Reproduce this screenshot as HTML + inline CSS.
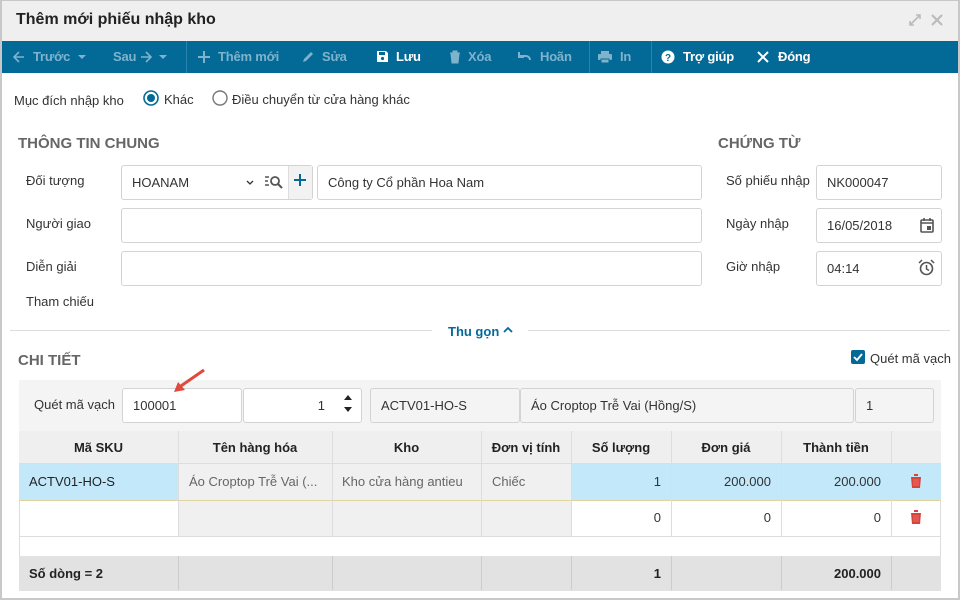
<!DOCTYPE html>
<html><head><meta charset="utf-8"><style>
*{box-sizing:border-box;margin:0;padding:0}
body{width:960px;height:600px;background:#fff;font-family:"Liberation Sans",sans-serif;font-size:13px;color:#333;position:relative;overflow:hidden}
.a{position:absolute}
.win{left:0;top:0;width:960px;height:600px;border:2px solid #c8c8c8;border-top:1px solid #c8c8c8}
.tb{left:2px;top:41px;width:956px;height:32px;background:#036a98}
.ti{position:absolute;top:49px;font-size:13px;color:#7fb3cc;font-weight:bold;letter-spacing:-.2px}
.tw{color:#fff}
.sep{position:absolute;top:41px;width:1px;height:32px;background:#2a84ad}
.lbl{position:absolute;font-size:13px;color:#333}
.inp{position:absolute;border:1px solid #d3d3d3;border-radius:3px;background:#fff;font-size:13px;padding-left:10px;display:flex;align-items:center}
.h{position:absolute;font-weight:bold;font-size:15px;color:#666}
</style></head><body>
<div class="a" style="left:2px;top:1px;width:956px;height:40px;background:#efefef"></div>
<div class="a win"></div>
<div class="a" style="left:16px;top:11px;font-size:16px;font-weight:bold;color:#222">Thêm mới phiếu nhập kho</div>
<svg class="a" style="left:908px;top:13px" width="14" height="14"><path d="M2 12L12 2M8 2h4v4M2 8v4h4" stroke="#bbb" stroke-width="1.6" fill="none"/></svg>
<svg class="a" style="left:930px;top:13px" width="14" height="14"><path d="M2 2L12 12M12 2L2 12" stroke="#bbb" stroke-width="2.2"/></svg>
<div class="a tb"></div>
<div class="sep" style="left:186px"></div><div class="sep" style="left:589px"></div><div class="sep" style="left:651px"></div>
<svg class="a" style="left:12px;top:50px" width="14" height="14"><path d="M12 7H2M7 2L2 7l5 5" stroke="#7fb3cc" stroke-width="1.6" fill="none"/></svg>
<div class="ti" style="left:33px">Trước</div>
<svg class="a" style="left:78px;top:55px" width="8" height="5"><path d="M0 0h8L4 4z" fill="#7fb3cc"/></svg>
<div class="ti" style="left:113px">Sau</div>
<svg class="a" style="left:139px;top:50px" width="14" height="14"><path d="M2 7h10M7 2l5 5-5 5" stroke="#7fb3cc" stroke-width="1.6" fill="none"/></svg>
<svg class="a" style="left:159px;top:55px" width="8" height="5"><path d="M0 0h8L4 4z" fill="#7fb3cc"/></svg>
<svg class="a" style="left:197px;top:50px" width="14" height="14"><path d="M7 1v12M1 7h12" stroke="#7fb3cc" stroke-width="2"/></svg>
<div class="ti" style="left:218px">Thêm mới</div>
<svg class="a" style="left:301px;top:50px" width="14" height="14"><path d="M2 12l1-3 7-7 2 2-7 7z" fill="#7fb3cc"/></svg>
<div class="ti" style="left:322px">Sửa</div>
<svg class="a" style="left:376px;top:50px" width="13" height="13"><path d="M1 1h9l2 2v9H1z" fill="#fff"/><rect x="3" y="2" width="6" height="3" fill="#036a98"/><circle cx="6.5" cy="8.5" r="1.6" fill="#036a98"/></svg>
<div class="ti tw" style="left:396px">Lưu</div>
<svg class="a" style="left:449px;top:50px" width="12" height="14"><path d="M1 3h10M4 3V1h4v2M2 4h8l-1 9H3z" fill="#7fb3cc" stroke="#7fb3cc"/></svg>
<div class="ti" style="left:468px">Xóa</div>
<svg class="a" style="left:517px;top:51px" width="15" height="12"><path d="M2 5h7a4 4 0 014 4M2 1v5h5" stroke="#7fb3cc" stroke-width="2" fill="none"/></svg>
<div class="ti" style="left:540px">Hoãn</div>
<svg class="a" style="left:597px;top:50px" width="16" height="14"><rect x="4" y="1" width="8" height="3" fill="#7fb3cc"/><rect x="1" y="4" width="14" height="6" rx="1" fill="#7fb3cc"/><rect x="4" y="9" width="8" height="4" fill="#7fb3cc" stroke="#036a98"/></svg>
<div class="ti" style="left:620px">In</div>
<svg class="a" style="left:661px;top:50px" width="14" height="14"><circle cx="7" cy="7" r="6.5" fill="#fff"/><text x="7" y="11" font-size="10" font-weight="bold" text-anchor="middle" fill="#036a98" font-family="Liberation Sans">?</text></svg>
<div class="ti tw" style="left:683px">Trợ giúp</div>
<svg class="a" style="left:757px;top:51px" width="12" height="12"><path d="M1 1l10 10M11 1L1 11" stroke="#fff" stroke-width="2"/></svg>
<div class="ti tw" style="left:778px">Đóng</div>

<div class="lbl" style="left:14px;top:93px">Mục đích nhập kho</div>
<svg class="a" style="left:143px;top:90px" width="16" height="16"><circle cx="8" cy="8" r="7" stroke="#036a98" stroke-width="1.6" fill="#fff"/><circle cx="8" cy="8" r="4" fill="#036a98"/></svg>
<div class="lbl" style="left:164px;top:92px">Khác</div>
<svg class="a" style="left:212px;top:90px" width="16" height="16"><circle cx="8" cy="8" r="7" stroke="#777" stroke-width="1.4" fill="#fff"/></svg>
<div class="lbl" style="left:232px;top:92px">Điều chuyển từ cửa hàng khác</div>

<div class="h" style="left:18px;top:135px">THÔNG TIN CHUNG</div>
<div class="h" style="left:718px;top:135px">CHỨNG TỪ</div>
<div class="lbl" style="left:26px;top:173px">Đối tượng</div>
<div class="lbl" style="left:26px;top:216px">Người giao</div>
<div class="lbl" style="left:26px;top:259px">Diễn giải</div>
<div class="lbl" style="left:26px;top:294px">Tham chiếu</div>
<div class="inp" style="left:121px;top:165px;width:192px;height:35px">HOANAM</div>
<div class="a" style="left:288px;top:166px;width:24px;height:33px;background:#f2f2f2;border-left:1px solid #ddd"></div>
<svg class="a" style="left:293px;top:173px" width="14" height="14"><path d="M7 1v12M1 7h12" stroke="#036a98" stroke-width="2"/></svg>
<svg class="a" style="left:246px;top:180px" width="8" height="5"><path d="M1 1l3 3 3-3" stroke="#333" stroke-width="1.3" fill="none"/></svg>
<svg class="a" style="left:265px;top:175px" width="20" height="14"><path d="M0 2h4M0 6h3M0 10h4" stroke="#555" stroke-width="1.4"/><circle cx="10" cy="6" r="4" stroke="#555" stroke-width="1.8" fill="none"/><path d="M13 9l4 4" stroke="#555" stroke-width="2"/></svg>
<div class="inp" style="left:317px;top:165px;width:385px;height:35px">Công ty Cổ phần Hoa Nam</div>
<div class="inp" style="left:121px;top:208px;width:581px;height:35px"></div>
<div class="inp" style="left:121px;top:251px;width:581px;height:35px"></div>
<div class="lbl" style="left:726px;top:173px">Số phiếu nhập</div>
<div class="lbl" style="left:726px;top:216px">Ngày nhập</div>
<div class="lbl" style="left:726px;top:259px">Giờ nhập</div>
<div class="inp" style="left:816px;top:165px;width:126px;height:35px">NK000047</div>
<div class="inp" style="left:816px;top:208px;width:126px;height:35px">16/05/2018</div>
<div class="inp" style="left:816px;top:251px;width:126px;height:35px">04:14</div>
<svg class="a" style="left:920px;top:218px" width="14" height="15"><rect x="1" y="2" width="12" height="12" rx="1" stroke="#555" stroke-width="1.6" fill="none"/><path d="M1 5h12M4 0v3M10 0v3" stroke="#555" stroke-width="1.6"/><rect x="7" y="8" width="4" height="4" fill="#555"/></svg>
<svg class="a" style="left:918px;top:259px" width="17" height="17"><circle cx="8.5" cy="9.5" r="6" stroke="#555" stroke-width="1.6" fill="none"/><path d="M8.5 6v4l2.5 1.5M1 4l3-3M16 4l-3-3" stroke="#555" stroke-width="1.5" fill="none"/></svg>

<div class="a" style="left:10px;top:330px;width:422px;height:1px;background:#ddd"></div>
<div class="a" style="left:528px;top:330px;width:422px;height:1px;background:#ddd"></div>
<div class="a" style="left:448px;top:324px;font-weight:bold;color:#036a98;font-size:13px">Thu gọn</div>
<svg class="a" style="left:503px;top:326px" width="10" height="7"><path d="M1 6l4-4 4 4" stroke="#036a98" stroke-width="1.8" fill="none"/></svg>

<div class="h" style="left:18px;top:352px">CHI TIẾT</div>
<svg class="a" style="left:851px;top:350px" width="14" height="14"><rect width="14" height="14" rx="2" fill="#036a98"/><path d="M3 7l3 3 5-6" stroke="#fff" stroke-width="1.8" fill="none"/></svg>
<div class="lbl" style="left:870px;top:351px">Quét mã vạch</div>

<div class="a" style="left:19px;top:380px;width:922px;height:51px;background:#f4f4f4"></div>
<div class="lbl" style="left:34px;top:397px">Quét mã vạch</div>
<div class="inp" style="left:122px;top:388px;width:120px;height:35px">100001</div>
<div class="inp" style="left:243px;top:388px;width:119px;height:35px;justify-content:flex-end;padding-right:36px">1</div>
<svg class="a" style="left:343px;top:392px" width="10" height="24"><path d="M1 8l4-5 4 5zM1 15l4 5 4-5z" fill="#222"/></svg>
<div class="inp" style="left:370px;top:388px;width:150px;height:35px;background:#f4f4f4">ACTV01-HO-S</div>
<div class="inp" style="left:520px;top:388px;width:334px;height:35px;background:#f4f4f4">Áo Croptop Trễ Vai (Hồng/S)</div>
<div class="inp" style="left:855px;top:388px;width:79px;height:35px;background:#f4f4f4">1</div>

<svg class="a" style="left:170px;top:366px" width="40" height="30"><path d="M34 4L8 22" stroke="#e04a3c" stroke-width="3"/><path d="M4 26l4-10 7 8z" fill="#e04a3c"/></svg>
<svg class="a" style="left:655px;top:446px" width="40" height="30"><path d="M34 4L8 22" stroke="#e04a3c" stroke-width="3"/><path d="M4 26l4-10 7 8z" fill="#e04a3c"/></svg>

<div class="a" style="left:19px;top:431px;width:922px;height:160px;border:1px solid #ddd;border-top:none"></div>
<div class="a" style="left:19px;top:431px;width:922px;height:33px;background:#efefef;border-bottom:1px solid #ddd"></div>
<div class="a" style="left:19px;top:464px;width:922px;height:36px;background:#fff;border-bottom:1px solid #ecdca0"></div>
<div class="a" style="left:19px;top:464px;width:159px;height:36px;background:#c2e8fa"></div>
<div class="a" style="left:178px;top:464px;width:393px;height:72px;background:#f0f0f0"></div>
<div class="a" style="left:571px;top:464px;width:370px;height:36px;background:#c2e8fa"></div>
<div class="a" style="left:19px;top:536px;width:922px;height:1px;background:#ddd"></div>
<div class="a" style="left:19px;top:500px;width:922px;height:1px;background:#e0d4a0"></div>
<div class="a" style="left:19px;top:556px;width:922px;height:35px;background:#e2e2e2"></div>
<div class="a" style="left:178px;top:431px;width:1px;height:105px;background:#ddd"></div>
<div class="a" style="left:332px;top:431px;width:1px;height:105px;background:#ddd"></div>
<div class="a" style="left:481px;top:431px;width:1px;height:105px;background:#ddd"></div>
<div class="a" style="left:571px;top:431px;width:1px;height:105px;background:#ddd"></div>
<div class="a" style="left:671px;top:431px;width:1px;height:105px;background:#ddd"></div>
<div class="a" style="left:781px;top:431px;width:1px;height:105px;background:#ddd"></div>
<div class="a" style="left:891px;top:431px;width:1px;height:105px;background:#ddd"></div>
<div class="a" style="left:178px;top:556px;width:1px;height:34px;background:#ccc"></div>
<div class="a" style="left:332px;top:556px;width:1px;height:34px;background:#ccc"></div>
<div class="a" style="left:481px;top:556px;width:1px;height:34px;background:#ccc"></div>
<div class="a" style="left:571px;top:556px;width:1px;height:34px;background:#ccc"></div>
<div class="a" style="left:671px;top:556px;width:1px;height:34px;background:#ccc"></div>
<div class="a" style="left:781px;top:556px;width:1px;height:34px;background:#ccc"></div>
<div class="a" style="left:891px;top:556px;width:1px;height:34px;background:#ccc"></div>
<div class="a" style="top:440px;left:19px;width:159px;text-align:center;font-weight:bold;color:#222">Mã SKU</div>
<div class="a" style="top:440px;left:178px;width:154px;text-align:center;font-weight:bold;color:#222">Tên hàng hóa</div>
<div class="a" style="top:440px;left:332px;width:149px;text-align:center;font-weight:bold;color:#222">Kho</div>
<div class="a" style="top:440px;left:481px;width:90px;text-align:center;font-weight:bold;color:#222">Đơn vị tính</div>
<div class="a" style="top:440px;left:571px;width:100px;text-align:center;font-weight:bold;color:#222">Số lượng</div>
<div class="a" style="top:440px;left:671px;width:110px;text-align:center;font-weight:bold;color:#222">Đơn giá</div>
<div class="a" style="top:440px;left:781px;width:110px;text-align:center;font-weight:bold;color:#222">Thành tiền</div>
<div class="a" style="top:474px;left:29px;color:#222">ACTV01-HO-S</div>
<div class="a" style="top:474px;left:189px;color:#666">Áo Croptop Trễ Vai (...</div>
<div class="a" style="top:474px;left:342px;color:#666">Kho cửa hàng antieu</div>
<div class="a" style="top:474px;left:492px;color:#666">Chiếc</div>
<div class="a" style="top:474px;left:571px;width:90px;text-align:right">1</div>
<div class="a" style="top:474px;left:671px;width:100px;text-align:right">200.000</div>
<div class="a" style="top:474px;left:781px;width:100px;text-align:right">200.000</div>
<div class="a" style="top:510px;left:571px;width:90px;text-align:right">0</div>
<div class="a" style="top:510px;left:671px;width:100px;text-align:right">0</div>
<div class="a" style="top:510px;left:781px;width:100px;text-align:right">0</div>
<svg class="a" style="left:910px;top:474px" width="12" height="14"><path d="M0 2h12M4 2V0h4v2M1 3h10l-1 11H2z" fill="#d9443a"/><path d="M4 5v7M6 5v7M8 5v7" stroke="#f08080" stroke-width=".7"/></svg>
<svg class="a" style="left:910px;top:510px" width="12" height="14"><path d="M0 2h12M4 2V0h4v2M1 3h10l-1 11H2z" fill="#d9443a"/><path d="M4 5v7M6 5v7M8 5v7" stroke="#f08080" stroke-width=".7"/></svg>
<div class="a" style="top:566px;left:29px;font-weight:bold;color:#222">Số dòng = 2</div>
<div class="a" style="top:566px;left:571px;width:90px;text-align:right;font-weight:bold;color:#222">1</div>
<div class="a" style="top:566px;left:781px;width:100px;text-align:right;font-weight:bold;color:#222">200.000</div>
</body></html>
